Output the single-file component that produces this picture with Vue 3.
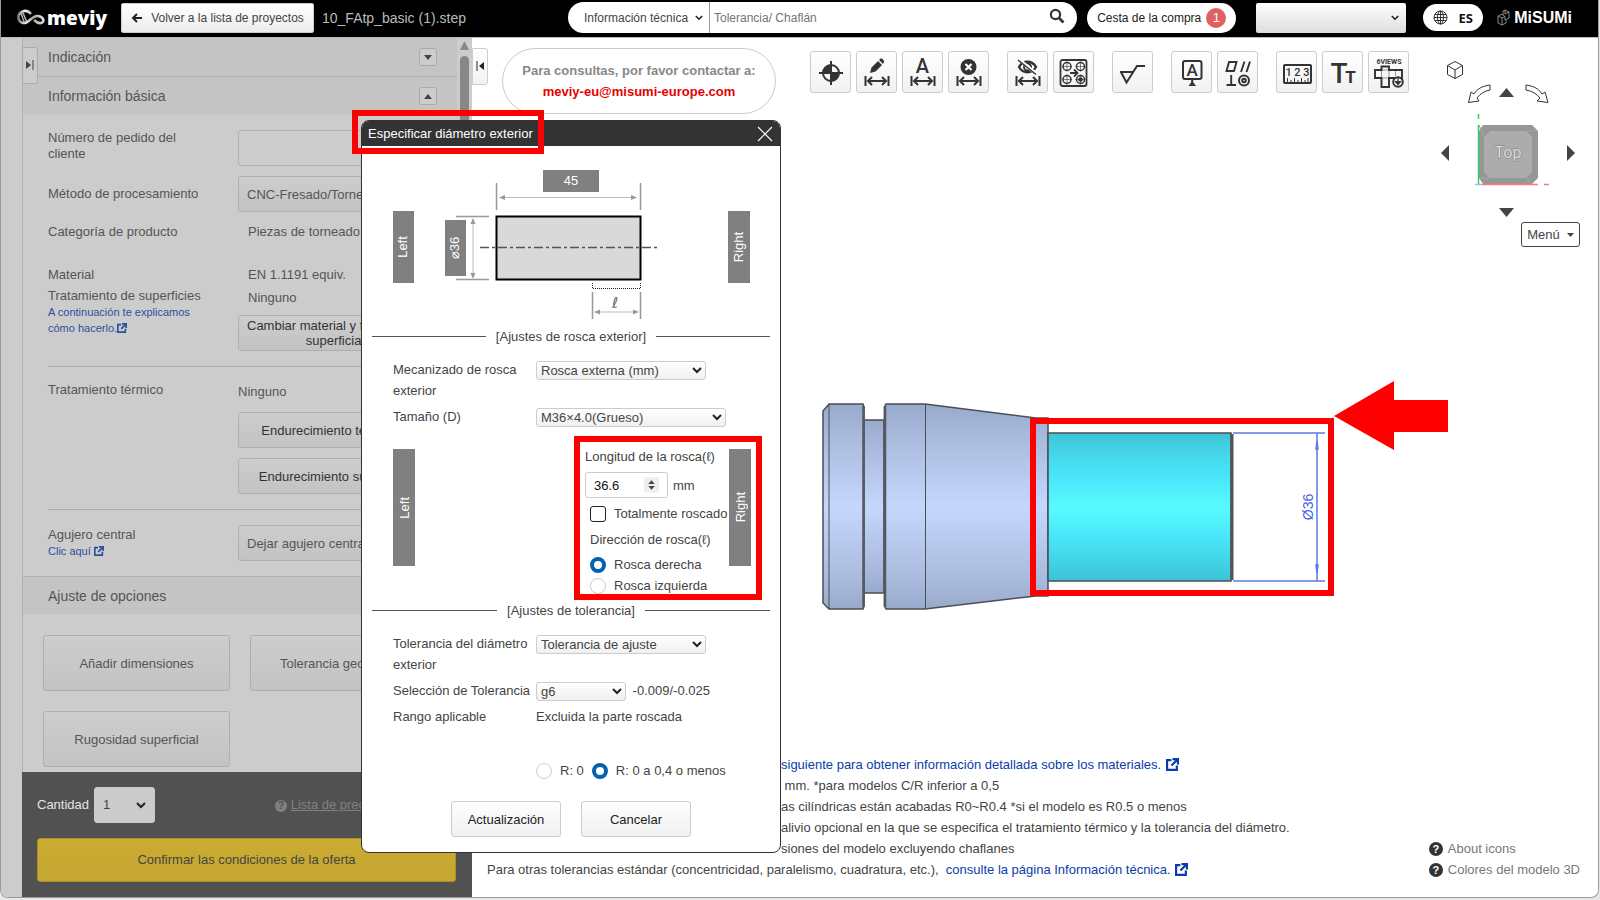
<script setup>
import { ref } from 'vue';

const busqueda = ref('');
const cantidad = ref('1');
const mecanizado = ref('Rosca externa (mm)');
const tamano = ref('M36×4.0(Grueso)');
const longitud = ref('36.6');
const totalmente = ref(false);
const direccion = ref('derecha');
const tolerancia = ref('Tolerancia de ajuste');
const seleccion = ref('g6');
const radio = ref('menos');

const opciones = ['Añadir dimensiones', 'Tolerancia geométrica', 'Rugosidad superficial'];

const herramientas = [
    ['origen', 'lapiz', 'auto', 'borrar'],
    ['ocultar', 'agujeros'],
    ['rugosidad'],
    ['referencia', 'geometrica'],
    ['regla', 'texto', 'vistas']
];

const conCota = ['lapiz', 'auto', 'borrar', 'ocultar'];

const notas = [
    { id: 1, texto: '', enlace: 'siguiente para obtener información detallada sobre los materiales.' },
    { id: 2, texto: ' mm. *para modelos C/R inferior a 0,5' },
    { id: 3, texto: 'as cilíndricas están acabadas R0~R0.4 *si el modelo es R0.5 o menos' },
    { id: 4, texto: 'alivio opcional en la que se especifica el tratamiento térmico y la tolerancia del diámetro.' },
    { id: 5, texto: 'siones del modelo excluyendo chaflanes' }
];
</script>

<template>
    <div class="window">
        <header class="topbar">
            <div class="logo">
                <svg width="31" height="18" viewBox="0 0 31 18" aria-hidden="true">
                    <defs>
                        <linearGradient id="metal" x1="0" x2="1">
                            <stop offset="0" stop-color="#777" />
                            <stop offset=".25" stop-color="#eee" />
                            <stop offset=".6" stop-color="#aaa" />
                            <stop offset="1" stop-color="#ddd" />
                        </linearGradient>
                    </defs>
                    <path d="M15 5C12 1 7 1 4 4C1 7 2 13 7 14C13 15 16 6 22 7C28 8 29 13 25 14C22 14.500 20 13 18 11" fill="none" stroke="url(#metal)" stroke-width="2.600" />
                    <path d="M4 4C7 5 6 11 9 14M6 3C9 5 8 10 11 12" fill="none" stroke="#bbb" stroke-width="1.400" />
                </svg>
                <span>meviy</span>
            </div>
            <button class="back" type="button">
                <svg width="12" height="10" viewBox="0 0 12 10"><path d="M11 5H2M6 1L2 5L6 9" fill="none" stroke="#222" stroke-width="2" /></svg>
                Volver a la lista de proyectos
            </button>
            <span class="file-name">10_FAtp_basic (1).step</span>
            <form class="search" @submit.prevent>
                <select class="search-type" aria-label="Tipo de búsqueda"><option>Información técnica</option></select>
                <input v-model="busqueda" type="text" placeholder="Tolerancia/ Chaflán" aria-label="Buscar" />
                <button type="submit" aria-label="Buscar">
                    <svg width="16" height="16" viewBox="0 0 16 16"><circle cx="6.500" cy="6.500" r="4.600" fill="none" stroke="#333" stroke-width="2.200" /><path d="M10 10L14.500 14.500" stroke="#333" stroke-width="2.600" /></svg>
                </button>
            </form>
            <button class="cart" type="button">Cesta de la compra <span>1</span></button>
            <select class="account" aria-label="Cuenta"><option></option></select>
            <button class="language" type="button">
                <svg width="15" height="15" viewBox="0 0 15 15" fill="none" stroke="#333"><circle cx="7.500" cy="7.500" r="6.500" /><ellipse cx="7.500" cy="7.500" rx="3" ry="6.500" /><path d="M1 7.500H14M7.500 1V14M2 4.500H13M2 10.500H13" /></svg>
                ES
            </button>
            <div class="misumi">
                <svg width="14" height="17" viewBox="0 0 14 17" fill="none" stroke="#aaa" stroke-width=".8"><path d="M1 7L5 9V16L1 14ZM5 9L8 7.500V11L12 9V3L8 1L6 2V6L8 7.500M1 7L4 5.500L6 6M8 1V5L12 3M5 16L9 14V11" /></svg>
                <strong>MiSUMi</strong>
            </div>
        </header>

        <main class="workspace">
            <aside class="sidebar">
                <div class="rail"></div>
                <div class="panel">
                    <button class="handle handle-left" type="button" aria-label="Expandir panel">
                        <svg width="8" height="10" viewBox="0 0 8 10"><path d="M0 1L5 5L0 9Z" fill="#444" /><path d="M7 0V10" stroke="#444" /></svg>
                    </button>
                    <div class="scroll-area">
                        <div class="fields">
                            <h2 class="section-head first">Indicación
                                <button type="button" aria-label="Abrir"><svg width="8" height="5" viewBox="0 0 8 5"><path d="M0 0H8L4 5Z" fill="#444" /></svg></button>
                            </h2>
                            <h2 class="section-head">Información básica
                                <button type="button" aria-label="Cerrar"><svg width="8" height="5" viewBox="0 0 8 5"><path d="M0 5H8L4 0Z" fill="#444" /></svg></button>
                            </h2>
                            <div class="group">
                                <div class="row">
                                    <label for="pedido">Número de pedido del cliente</label>
                                    <input id="pedido" class="box" type="text" />
                                </div>
                                <div class="row centered">
                                    <label for="metodo">Método de procesamiento</label>
                                    <select id="metodo" class="box"><option>CNC-Fresado/Torneado</option></select>
                                </div>
                                <div class="row category">
                                    <span>Categoría de producto</span>
                                    <span class="indent">Piezas de torneado</span>
                                </div>
                                <div class="row material">
                                    <div>
                                        <p>Material</p>
                                        <p class="treatment">Tratamiento de superficies</p>
                                        <a href="#">A continuación te explicamos<br />cómo hacerlo.<svg class="ext" viewBox="0 0 12 12"><path d="M5 2H1V11H10V7M6 1H11V6M11 1L5 7" /></svg></a>
                                    </div>
                                    <div>
                                        <p class="indent">EN 1.1191 equiv.</p>
                                        <p class="indent none">Ninguno</p>
                                        <button class="box dark" type="button">Cambiar material y tratamiento<br />superficial</button>
                                    </div>
                                </div>
                            </div>
                            <div class="group ruled">
                                <div class="row">
                                    <span>Tratamiento térmico</span>
                                    <div class="stack">
                                        <span>Ninguno</span>
                                        <button class="box dark" type="button">Endurecimiento templado</button>
                                        <button class="box dark" type="button">Endurecimiento superficial</button>
                                    </div>
                                </div>
                            </div>
                            <div class="group ruled">
                                <div class="row centered">
                                    <div>
                                        <label for="agujero">Agujero central</label>
                                        <a href="#">Clic aquí <svg class="ext" viewBox="0 0 12 12"><path d="M5 2H1V11H10V7M6 1H11V6M11 1L5 7" /></svg></a>
                                    </div>
                                    <select id="agujero" class="box"><option>Dejar agujero central</option></select>
                                </div>
                            </div>
                            <h2 class="section-head options-head">Ajuste de opciones</h2>
                            <div class="options">
                                <button v-for="opcion in opciones" :key="opcion" class="box" type="button">{{ opcion }}</button>
                            </div>
                        </div>
                        <div class="scrollbar">
                            <svg width="9" height="8" viewBox="0 0 9 8"><path d="M0 8H9L5 0H4Z" fill="#878787" /></svg>
                            <span></span>
                        </div>
                    </div>
                    <footer class="order">
                        <div class="order-row">
                            <label for="cantidad">Cantidad</label>
                            <select id="cantidad" v-model="cantidad"><option>1</option></select>
                            <a href="#"><span class="help">?</span> <u>Lista de precios</u></a>
                        </div>
                        <button class="confirm" type="button">Confirmar las condiciones de la oferta</button>
                    </footer>
                </div>
            </aside>

            <section class="viewer">
                <div class="viewer-top">
                    <button class="handle" type="button" aria-label="Contraer panel">
                        <svg width="8" height="10" viewBox="0 0 8 10"><path d="M8 1L3 5L8 9Z" fill="#222" /><path d="M1 0V10" stroke="#222" /></svg>
                    </button>
                    <div class="contact">
                        <strong>Para consultas, por favor contactar a:</strong><br />
                        <a href="mailto:meviy-eu@misumi-europe.com">meviy-eu@misumi-europe.com</a>
                    </div>
                    <div class="toolbar">
                        <div v-for="(grupo, i) in herramientas" :key="i" class="tool-group">
                            <button v-for="icono in grupo" :key="icono" type="button" :aria-label="icono">
                                <svg viewBox="1 1 39 39" fill="none" stroke="#333" stroke-width="2">
                                    <path v-if="conCota.includes(icono)" d="M9.500 24V34M32.500 24V34M12 29H30M16 25L12 29L16 33M26 25L30 29L26 33" />
                                    <template v-if="icono === 'origen'">
                                        <circle cx="21" cy="21" r="8" />
                                        <path d="M21 9V33M9 21H33" />
                                        <path d="M21 21V13A8 8 0 0 0 13 21ZM21 21V29A8 8 0 0 0 29 21Z" fill="#333" stroke="none" />
                                    </template>
                                    <path v-else-if="icono === 'lapiz'" d="M14 21L15.500 15.500L22 9L26 13L19.500 19.500ZM23 8L24.500 6.500C26 6 28.500 8.500 28 10L27 12Z" fill="#333" stroke="none" />
                                    <text v-else-if="icono === 'auto'" x="20.500" y="20.500" class="glyph" font-size="20">A</text>
                                    <template v-else-if="icono === 'borrar'">
                                        <circle cx="20.500" cy="15" r="8" fill="#333" stroke="none" />
                                        <path d="M17.500 12L23.500 18M23.500 12L17.500 18" stroke="#fff" stroke-width="2.200" />
                                    </template>
                                    <template v-else-if="icono === 'ocultar'">
                                        <path d="M12 15C16 8 25 8 29 15C25 22 16 22 12 15Z" stroke-width="2.400" />
                                        <circle cx="20.500" cy="15" r="3.500" />
                                        <path d="M12 7.500L30 22.500" stroke="#fff" stroke-width="3.500" />
                                        <path d="M11 8L29 22.500" stroke-width="1.500" />
                                    </template>
                                    <template v-else-if="icono === 'agujeros'">
                                        <rect x="7.500" y="8" width="26" height="26" rx="2" stroke-width="1.800" />
                                        <g stroke-width="1.500"><circle cx="14" cy="14.500" r="4" /><circle cx="27.500" cy="14.500" r="4" /><circle cx="14" cy="27.500" r="4" /><circle cx="27.500" cy="27.500" r="4" /></g>
                                        <g stroke-width=".6"><path d="M9 14.500H19M14 9.500V19.500M22.500 14.500H32.500M27.500 9.500V19.500M9 27.500H19M14 22.500V32.500M22.500 27.500H32.500M27.500 22.500V32.500" /><circle cx="27.500" cy="27.500" r="2" fill="#333" /></g>
                                        <path d="M17 21H24M21 17.500L24.500 21L21 24.500" stroke-width="1.800" />
                                    </template>
                                    <path v-else-if="icono === 'rugosidad'" d="M8 20H21M9 20L14.500 30.500L25 14H33" />
                                    <template v-else-if="icono === 'referencia'">
                                        <rect x="12" y="9" width="18.500" height="18" rx="2" />
                                        <text x="21.200" y="24" class="glyph" font-size="17">A</text>
                                        <path d="M21.200 27V32" /><path d="M17.500 34L21.200 29L25 34Z" fill="#333" stroke="none" />
                                    </template>
                                    <template v-else-if="icono === 'geometrica'">
                                        <path d="M12 10H19.500L17 19H9.500ZM27.500 9.500L24 20M33 9.500L29.500 20M9.500 33H19M14.200 23V33" stroke-width="1.900" />
                                        <circle cx="27" cy="28.500" r="5" /><circle cx="27" cy="28.500" r="1.800" />
                                    </template>
                                    <template v-else-if="icono === 'regla'">
                                        <rect x="8" y="13" width="27" height="18" rx="1" />
                                        <text x="21.500" y="24" class="glyph" font-size="11">1 2 3</text>
                                        <path d="M11.500 26V30M15 28V30M18.500 26V30M22 28V30M25.500 26V30M29 28V30M32 26V30" stroke-width="1" />
                                    </template>
                                    <template v-else-if="icono === 'texto'">
                                        <text x="17" y="31" class="glyph" font-size="28">T</text>
                                        <text x="28.500" y="31" class="glyph heavy" font-size="17">T</text>
                                    </template>
                                    <template v-else>
                                        <text x="21" y="11.500" class="glyph heavy" font-size="7">6VIEWS</text>
                                        <path d="M13.500 18V14.500H21V18H34V26H21V35H13.500V26H7V18Z" stroke-width="1.900" />
                                        <path d="M13.500 18H21V26H13.500ZM27.500 18V24" stroke-width=".5" />
                                        <circle cx="30" cy="30" r="4.800" fill="#f4f4f4" /><path d="M30 26V31M27.500 29.500L30 32.500L32.500 29.500Z" fill="#333" stroke-width="1.200" />
                                    </template>
                                </svg>
                            </button>
                        </div>
                    </div>
                    <div class="navigator">
                        <svg width="140" height="164" viewBox="0 0 140 164" role="img" aria-label="Vista Top">
                            <g fill="#fff" stroke="#333" stroke-width="1">
                                <path d="M7.500 7.500L15 3.500L22.500 7.500V16.500L15 20.500L7.500 16.500ZM7.500 7.500L15 12L22.500 7.500M15 12V20.500" />
                                <path d="M50 27C42 28 37 31 34 36L31 34L28.500 44.500L39 43L37 40C40 36 44 33 50 32Z" />
                                <path d="M86 27C94 28 99 31 102 36L105 34L108 44.500L97 43L100 40C97 36 92 33 86 32Z" />
                            </g>
                            <path d="M59 39H74L66.500 30ZM59 150H74L66.500 159ZM9 87V103L1 95ZM127 87V103L135 95Z" fill="#444" />
                            <path d="M43 67H92L98 73V120L92 126H43L39 120V73Z" fill="#979797" />
                            <path d="M50 73H86L92 79V114L86 120H50L44 114V79Z" fill="#acacac" />
                            <path d="M39 67L44 79M98 73L86 73M39 120L50 120M92 126L86 120" stroke="#a3a3a3" />
                            <text x="68" y="100" class="top-label">Top</text>
                            <path d="M38.500 56V61M38.500 67V126" stroke="#35cc60" stroke-width="1.500" />
                            <path d="M42 126.500H98M104 126.500H109" stroke="#f77" stroke-width="1.500" />
                            <path d="M35 126.500H42" stroke="#8bc4f5" stroke-width="1.500" />
                        </svg>
                        <button class="menu" type="button">Menú <svg width="7" height="4" viewBox="0 0 7 4"><path d="M0 0H7L3.500 4Z" fill="#444" /></svg></button>
                    </div>
                </div>

                <!-- pieza torneada con la rosca exterior resaltada -->
                <svg class="model" width="660" height="260" viewBox="800 370 660 260" role="img" aria-label="Modelo de la pieza">
                    <defs>
                        <linearGradient id="acero" x1="0" y1="0" x2="0" y2="1">
                            <stop offset="0" stop-color="#98aacb" />
                            <stop offset=".12" stop-color="#a5b6d8" />
                            <stop offset=".5" stop-color="#c5d7fd" />
                            <stop offset=".88" stop-color="#a7b8da" />
                            <stop offset="1" stop-color="#98aacb" />
                        </linearGradient>
                        <linearGradient id="rosca" x1="0" y1="0" x2="0" y2="1">
                            <stop offset="0" stop-color="#3cc3d6" />
                            <stop offset=".15" stop-color="#45d8ea" />
                            <stop offset=".3" stop-color="#49e6f9" />
                            <stop offset=".5" stop-color="#58fbff" />
                            <stop offset=".7" stop-color="#49e6f9" />
                            <stop offset="1" stop-color="#3cc3d6" />
                        </linearGradient>
                    </defs>
                    <g fill="url(#acero)" stroke="#4a4e55" stroke-width="1.500">
                        <rect x="863" y="420" width="21" height="173" />
                        <path d="M829 404H863L864 407V606L863 609H829L823 603V411Z" />
                        <path d="M886 404H925L1036 418H1048V596H1036L925 609H886L884.500 606V407Z" />
                        <path d="M829 404V609M925.500 404V609" stroke-width="1" />
                    </g>
                    <path d="M863.500 406V607M885 406V607" stroke="#55585d" stroke-width="2.500" />
                    <rect x="1048" y="433" width="183" height="148" fill="url(#rosca)" stroke="#4a4e55" stroke-width="1.500" />
                    <path d="M1232 434V580" stroke="#555" stroke-width="3" />
                    <g stroke="#5b7be8" stroke-width="1.500" fill="#4464dd">
                        <path d="M1233 433H1325M1233 581H1325M1317 433V581" />
                        <path d="M1316 449L1317 441L1318 449ZM1316 565L1317 573L1318 565Z" />
                    </g>
                    <text transform="translate(1313 507) rotate(-90)" class="dimension">Ø36</text>
                    <rect x="1033" y="421" width="298" height="172" fill="none" stroke="#f00" stroke-width="6" />
                    <path d="M1334 416L1394 381V400H1448V432H1394V450Z" fill="#f00" />
                </svg>

                <div class="viewer-bottom">
                    <div class="notes">
                        <p v-for="nota in notas" :key="nota.id" class="rest">{{ nota.texto }}<a v-if="nota.enlace" href="#">{{ nota.enlace }} <svg class="ext large" viewBox="0 0 12 12"><path d="M5 2H1V11H10V7M6 1H11V6M11 1L5 7" /></svg></a></p>
                        <p>Para otras tolerancias estándar (concentricidad, paralelismo, cuadratura, etc.),&nbsp; <a href="#">consulte la página Información técnica. <svg class="ext large" viewBox="0 0 12 12"><path d="M5 2H1V11H10V7M6 1H11V6M11 1L5 7" /></svg></a></p>
                    </div>
                    <nav class="help-links">
                        <a href="#"><span class="help">?</span>About icons</a>
                        <a href="#"><span class="help">?</span>Colores del modelo 3D</a>
                    </nav>
                </div>
            </section>
        </main>

        <div class="dialog" role="dialog" aria-labelledby="dialog-title">
            <header class="dialog-head">
                <h1 id="dialog-title">Especificar diámetro exterior</h1>
                <button type="button" aria-label="Cerrar"><svg width="16" height="16" viewBox="0 0 16 16"><path d="M1 1L15 15M15 1L1 15" stroke="#fff" stroke-width="1.200" /></svg></button>
            </header>
            <svg class="diagram" viewBox="362 146 418 180" role="img" aria-label="Esquema de cotas">
                <g fill="#808080"><rect x="543" y="170" width="56" height="22" /><rect x="393" y="211" width="21" height="72" /><rect x="445" y="220" width="21" height="56" /><rect x="728" y="211" width="22" height="72" /></g>
                <g class="badge-text">
                    <text x="571" y="185">45</text>
                    <text transform="translate(407 247) rotate(-90)">Left</text>
                    <text transform="translate(459 248) rotate(-90)">⌀36</text>
                    <text transform="translate(743 247) rotate(-90)">Right</text>
                </g>
                <rect x="496.500" y="216.500" width="144" height="63" fill="#d9d9d9" stroke="#000" stroke-width="2" />
                <path d="M480 247.500H658" stroke="#555" stroke-width="1.500" stroke-dasharray="9 3 3 3" />
                <path d="M496.500 183V210M640.500 183V210M456 216.500H489M456 279.500H489M592.500 292V319M640.500 292V319" stroke="#999" stroke-width="1.500" />
                <path d="M500 197.500H636M473 220V277M595 312H637" stroke="#bbb" />
                <path d="M499 197.500L505 195V200ZM637 197.500L631 195V200ZM473 218L470.500 224H475.500ZM473 279L470.500 273H475.500ZM594 312L600 309.500V314.500ZM639 312L633 309.500V314.500Z" fill="#999" />
                <path d="M592.500 283V288.500H640.500V283" fill="none" stroke="#222" stroke-dasharray="1 1" />
                <text x="615" y="308" class="ell">ℓ</text>
            </svg>
            <h2 class="divider"><span>[Ajustes de rosca exterior]</span></h2>
            <div class="settings">
                <label for="mecanizado">Mecanizado de rosca exterior</label>
                <div><select id="mecanizado" v-model="mecanizado" class="mid"><option>Rosca externa (mm)</option></select></div>
                <label for="tamano">Tamaño (D)</label>
                <div><select id="tamano" v-model="tamano" class="wide"><option>M36×4.0(Grueso)</option></select></div>
            </div>
            <div class="thread">
                <div class="side"><span>Left</span></div>
                <div class="thread-form">
                    <label for="longitud">Longitud de la rosca(ℓ)</label>
                    <div class="measure">
                        <div class="number">
                            <input id="longitud" v-model="longitud" type="text" inputmode="decimal" />
                            <svg width="16" height="16" viewBox="0 0 16 16"><rect width="16" height="16" fill="#eee" /><path d="M4.500 7H11.500L8 3ZM4.500 9H11.500L8 13Z" fill="#444" /></svg>
                        </div>
                        mm
                    </div>
                    <label class="choice full"><input v-model="totalmente" type="checkbox" />Totalmente roscado</label>
                    <p>Dirección de rosca(ℓ)</p>
                    <label class="choice"><input v-model="direccion" type="radio" name="direccion" value="derecha" />Rosca derecha</label>
                    <label class="choice"><input v-model="direccion" type="radio" name="direccion" value="izquierda" />Rosca izquierda</label>
                </div>
                <div class="side"><span>Right</span></div>
            </div>
            <h2 class="divider"><span>[Ajustes de tolerancia]</span></h2>
            <div class="settings">
                <label for="tolerancia">Tolerancia del diámetro exterior</label>
                <div><select id="tolerancia" v-model="tolerancia" class="mid"><option>Tolerancia de ajuste</option></select></div>
                <label for="seleccion">Selección de Tolerancia</label>
                <div><select id="seleccion" v-model="seleccion" class="short"><option>g6</option></select> -0.009/-0.025</div>
                <span>Rango aplicable</span>
                <span>Excluida la parte roscada</span>
            </div>
            <div class="radii">
                <label class="choice"><input v-model="radio" type="radio" name="radio" value="cero" />R: 0</label>
                <label class="choice"><input v-model="radio" type="radio" name="radio" value="menos" />R: 0 a 0,4 o menos</label>
            </div>
            <div class="actions">
                <button type="button">Actualización</button>
                <button type="button">Cancelar</button>
            </div>
        </div>
        <div class="mark mark-title"></div>
        <div class="mark mark-thread"></div>
    </div>
</template>

<style>
body {
    margin: 0;
    background: #e8e8e8;
}
</style>

<style scoped>
* {
    box-sizing: border-box;
}

.window {
    --chevron: url("data:image/svg+xml,%3Csvg xmlns='http://www.w3.org/2000/svg' viewBox='0 0 10 7'%3E%3Cpath d='M1 1l4 4 4-4' fill='none' stroke='%23222' stroke-width='2'/%3E%3C/svg%3E");
    position: relative;
    display: flex;
    flex-direction: column;
    height: calc(100vh - 2px);
    min-height: 898px;
    margin-right: 1px;
    border: solid #999;
    border-width: 0 1px 1px;
    border-radius: 0 0 8px 8px;
    overflow: hidden;
    background: #fff;
    font: 13px/16px "Liberation Sans", Arial, sans-serif;
    color: #444;
}

button,
input,
select {
    font: inherit;
    color: inherit;
}

button {
    padding: 0;
    cursor: pointer;
}

select {
    appearance: none;
    background: var(--chevron) no-repeat right 3px center / 10px 7px, linear-gradient(#fff, #f0f0f0);
    border: 1px solid #ccc;
    border-radius: 3px;
}

h1,
h2,
p {
    margin: 0;
    font-size: inherit;
    font-weight: normal;
}

a {
    color: #0a3cab;
    text-decoration: none;
}

.ext {
    width: 10px;
    height: 10px;
    fill: none;
    stroke: currentColor;
    stroke-width: 2;
    vertical-align: -1px;
}

.ext.large {
    width: 13px;
    height: 13px;
    margin-left: 1px;
    vertical-align: -2px;
}

/* --- Barra superior --- */
.topbar {
    display: flex;
    align-items: center;
    flex: none;
    height: 38px;
    padding: 0 26px 2px 15px;
    border-bottom: 1px solid #bbb;
    background: #000;
    font-size: 12px;
}

.logo {
    display: flex;
    align-items: center;
    width: 105px;
    color: #fff;
    font: 800 19px/28px "Open Sans", sans-serif;
}

.back {
    display: flex;
    align-items: center;
    justify-content: center;
    gap: 8px;
    width: 193px;
    height: 30px;
    border: 1px solid #ccc;
    border-radius: 2px;
    background: linear-gradient(#fff, #ececec);
}

.file-name {
    width: 246px;
    margin-left: 8px;
    color: #bbb;
    font-size: 14px;
}

.search {
    display: flex;
    flex: 1;
    height: 31px;
    border-radius: 16px;
    overflow: hidden;
    background: #fff;
}

.search-type {
    width: 142px;
    padding: 0 0 0 16px;
    border: 0;
    border-right: 1px solid #999;
    border-radius: 0;
    background: var(--chevron) no-repeat right 6px center / 8px 6px;
}

.search input {
    flex: 1;
    min-width: 0;
    padding: 0 4px;
    border: 0;
    background: none;
}

.search button {
    width: 40px;
    border: 0;
    background: none;
}

.cart {
    display: flex;
    align-items: center;
    justify-content: center;
    gap: 5px;
    width: 149px;
    height: 30px;
    margin-left: 10px;
    border: 0;
    border-radius: 15px;
    background: #fff;
    color: #222;
}

.cart span {
    width: 20px;
    border-radius: 50%;
    background: #e06161;
    color: #fff;
    font-size: 13px;
    line-height: 20px;
}

.account {
    width: 150px;
    height: 30px;
    margin: 0 17px 0 20px;
    border: 0;
    border-radius: 2px;
    background: var(--chevron) no-repeat right 7px center / 8px 6px, linear-gradient(#fff, #ddd);
}

.language {
    display: flex;
    align-items: center;
    justify-content: center;
    gap: 10px;
    width: 60px;
    height: 27px;
    border: 0;
    border-radius: 14px;
    background: #fff;
    color: #111;
    font: bold 13px "Open Sans", sans-serif;
}

.misumi {
    display: flex;
    align-items: center;
    gap: 3px;
    margin-left: 14px;
    color: #fff;
    font-size: 16px;
}

/* --- Panel lateral --- */
.workspace {
    display: flex;
    flex: 1;
    min-height: 0;
}

.sidebar {
    display: flex;
    flex: none;
    width: 471px;
    background: #ccc;
    color: #555;
}

.rail {
    width: 21px;
}

.panel {
    position: relative;
    display: flex;
    flex-direction: column;
    flex: 1;
    border-left: 1px solid #b2b2b2;
}

.handle {
    width: 16px;
    height: 37px;
    border: 1px solid #ccc;
    border-radius: 0 3px 3px 0;
    background: linear-gradient(#fff, #f2f2f2);
}

.handle-left {
    position: absolute;
    top: 9px;
    left: -1px;
    border-color: #aaa;
    background: #ccc;
}

.scroll-area {
    display: flex;
    flex: 1;
    min-height: 0;
    overflow: hidden;
}

.fields {
    flex: 1;
}

.section-head {
    display: flex;
    align-items: center;
    justify-content: space-between;
    height: 38px;
    padding: 0 20px 0 25px;
    background: #c4c4c4;
    font-size: 14px;
}

.section-head button {
    display: flex;
    align-items: center;
    justify-content: center;
    width: 18px;
    height: 18px;
    border: 1px solid #aaa;
    border-radius: 3px;
    background: #ccc;
}

.section-head.first {
    height: 39px;
    border-bottom: 1px solid #adadad;
}

.group {
    display: flex;
    flex-direction: column;
    gap: 10px;
    margin: 0 20px 0 25px;
    padding: 15px 0;
}

.ruled {
    border-top: 1px solid #adadad;
}

.row {
    display: grid;
    grid-template-columns: 155px 194px;
    gap: 35px;
}

.row.centered {
    align-items: center;
}

.row label {
    display: block;
}

.row a {
    display: block;
    color: #2a519d;
    font-size: 11px;
}

.row.category {
    margin-top: 2px;
}

.row.material {
    margin-top: 17px;
}

.indent {
    padding-left: 10px;
}

.treatment {
    margin-top: 5px;
}

.none {
    margin: 7px 0 9px;
}

.box {
    width: 100%;
    height: 36px;
    padding: 0 8px;
    border: 1px solid #afafaf;
    border-radius: 3px;
    background: linear-gradient(#cdcdcd, #c3c3c3);
    line-height: 15px;
}

input.box {
    background: #ccc;
}

.dark {
    color: #333;
    white-space: nowrap;
}

.stack {
    display: flex;
    flex-direction: column;
    gap: 10px;
    line-height: 20px;
}

.options-head {
    border-top: 1px solid #b2b2b2;
}

.options {
    display: grid;
    grid-template-columns: 1fr 1fr;
    gap: 20px;
    padding: 21px 20px;
}

.options .box {
    height: 56px;
}

.scrollbar {
    display: flex;
    flex-direction: column;
    align-items: center;
    gap: 6px;
    width: 15px;
    padding-top: 4px;
}

.scrollbar span {
    width: 9px;
    height: 480px;
    border-radius: 5px;
    background: #878787;
}

.order {
    flex: none;
    padding: 15px 16px 15px 15px;
    margin-left: -1px;
    background: #515151;
}

.order-row {
    display: flex;
    align-items: center;
    gap: 5px;
    margin-bottom: 15px;
    color: #e4e4e4;
}

.order-row select {
    width: 61px;
    height: 36px;
    padding: 0 8px;
    background: var(--chevron) no-repeat right 8px center / 10px 7px, #cbcbcb;
    color: #444;
}

.order-row a {
    margin-left: 115px;
    color: #808080;
}

.help {
    display: inline-block;
    width: 14px;
    border-radius: 50%;
    background: #333;
    color: #fff;
    font-size: 11px;
    font-weight: bold;
    line-height: 14px;
    text-align: center;
}

.order .help {
    width: 12px;
    background: #808080;
    color: #515151;
    font-size: 10px;
    line-height: 12px;
}

.confirm {
    width: 100%;
    height: 44px;
    border: 1px solid #a98f25;
    border-radius: 3px;
    background: linear-gradient(#cbad32, #c4a631);
    color: #444;
}

/* --- Visor --- */
.viewer {
    display: flex;
    flex-direction: column;
    flex: 1;
    min-width: 0;
}

.viewer-top {
    display: flex;
    align-items: flex-start;
    height: 212px;
    padding: 10px 18px 0 0;
}

.contact {
    width: 274px;
    height: 66px;
    margin: 0 34px 0 14px;
    padding-top: 11px;
    border: 1px solid #ccc;
    border-radius: 33px;
    color: #888;
    font-weight: bold;
    line-height: 21px;
    text-align: center;
}

.contact a {
    color: #e60000;
}

.toolbar {
    display: flex;
    gap: 18px;
    padding-top: 3px;
}

.tool-group {
    display: flex;
    gap: 5px;
}

.tool-group button {
    width: 41px;
    height: 42px;
    border: 1px solid #ccc;
    border-radius: 3px;
    background: linear-gradient(#fff, #f1f1f1);
}

.tool-group svg {
    display: block;
    width: 39px;
    height: 39px;
}

.glyph {
    fill: #333;
    stroke: none;
    font-family: Roboto, sans-serif;
    text-anchor: middle;
    font-weight: 500;
}

.heavy {
    font-weight: 700;
}

.navigator {
    display: flex;
    flex-direction: column;
    align-items: flex-end;
    width: 140px;
    margin-left: auto;
    padding-top: 10px;
}

.top-label {
    fill: #ddd;
    stroke: #777;
    stroke-width: 1;
    paint-order: stroke;
    font: 16px Roboto, sans-serif;
    text-anchor: middle;
}

.menu {
    display: flex;
    align-items: center;
    justify-content: center;
    gap: 7px;
    width: 59px;
    height: 25px;
    border: 1px solid #444;
    border-radius: 3px;
    background: #fff;
}

.model {
    display: block;
    flex: none;
    margin: 120px 0 0 328px;
}

.dimension {
    fill: #4464dd;
    font: 14px "Liberation Sans", sans-serif;
    text-anchor: middle;
}

.viewer-bottom {
    display: flex;
    align-items: flex-end;
    justify-content: space-between;
    margin-top: auto;
    padding: 0 18px 17px 15px;
    line-height: 21px;
    white-space: nowrap;
}

.rest {
    padding-left: 294px;
    white-space: pre;
}

.help-links {
    display: grid;
}

.help-links a {
    color: #777;
}

.help-links .help {
    margin-right: 5px;
}

/* --- Ventana de diálogo --- */
.dialog {
    position: absolute;
    top: 120px;
    left: 360px;
    width: 420px;
    border: 1px solid #333;
    border-radius: 8px;
    overflow: hidden;
    background: #fff;
    line-height: 21px;
}

.dialog-head {
    display: flex;
    align-items: center;
    justify-content: space-between;
    height: 25px;
    padding: 0 7px 0 6px;
    background: #333;
    color: #fff;
}

.dialog-head button {
    display: flex;
    border: 0;
    background: none;
}

.diagram {
    display: block;
    width: 100%;
}

.badge-text {
    fill: #fff;
    font: 13px "Liberation Sans", sans-serif;
    text-anchor: middle;
}

.ell {
    fill: #666;
    font: italic 15px "DejaVu Sans", sans-serif;
    text-anchor: middle;
}

.divider {
    display: flex;
    align-items: center;
    gap: 10px;
    margin: 0 10px;
}

.divider::before,
.divider::after {
    content: '';
    flex: 1;
    height: 1px;
    background: #555;
}

.settings {
    display: grid;
    grid-template-columns: 138px 1fr;
    gap: 5px;
    padding: 12px 20px 0 31px;
}

.settings select {
    height: 19px;
    padding: 0 4px;
    line-height: 17px;
    vertical-align: middle;
}

.mid {
    width: 170px;
}

.wide {
    width: 190px;
}

.short {
    width: 90px;
    margin-right: 3px;
}

.thread {
    display: flex;
    margin: 22px 29px 3px 31px;
}

.side {
    display: flex;
    align-items: center;
    justify-content: center;
    width: 22px;
    height: 117px;
    background: #808080;
    color: #fff;
}

.side span {
    writing-mode: vertical-rl;
    transform: rotate(180deg);
}

.thread-form {
    display: flex;
    flex-direction: column;
    width: 144px;
    height: 148px;
    margin-left: auto;
    white-space: nowrap;
}

.thread-form > label:first-child {
    line-height: 16px;
}

.measure {
    display: flex;
    align-items: center;
    gap: 5px;
    margin: 7px 0 5px;
}

.number {
    display: flex;
    align-items: center;
    width: 83px;
    height: 26px;
    padding: 0 8px;
    border: 1px solid #ccc;
    border-radius: 3px;
}

.number input {
    width: 50px;
    padding: 0;
    border: 0;
    color: #111;
}

.choice {
    display: flex;
    align-items: center;
    gap: 8px;
    padding-left: 5px;
}

.full {
    margin-bottom: 5px;
}

.thread-form p {
    margin-bottom: 4px;
    padding-left: 5px;
}

.choice input {
    appearance: none;
    width: 16px;
    height: 16px;
    margin: 0;
    border: 1px solid #ccc;
    border-radius: 50%;
    background: #fff;
}

.choice input[type='checkbox'] {
    border: 1px solid #222;
    border-radius: 3px;
}

.choice input[type='radio']:checked {
    border: 4px solid #0560b0;
}

.radii {
    display: flex;
    gap: 3px;
    padding: 33px 0 0 169px;
}

.radii .choice {
    padding-left: 5px;
}

.actions {
    display: flex;
    justify-content: center;
    gap: 20px;
    padding: 20px 0 15px;
}

.actions button {
    width: 110px;
    height: 36px;
    border: 1px solid #ccc;
    border-radius: 3px;
    background: linear-gradient(#fff, #f0f0f0);
    color: #222;
}

/* --- Recuadros de resalte --- */
.mark {
    position: absolute;
    border: 6px solid #f00;
}

.mark-title {
    top: 110px;
    left: 351px;
    width: 192px;
    height: 44px;
}

.mark-thread {
    top: 436px;
    left: 573px;
    width: 188px;
    height: 164px;
}
</style>
